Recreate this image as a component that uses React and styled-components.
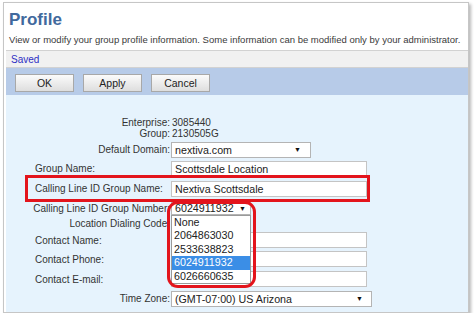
import React from "react";
import styled, { createGlobalStyle } from "styled-components";

const Global = createGlobalStyle`
  html, body { margin: 0; padding: 0; background: #fff; }
  body { font-family: "Liberation Sans", Arial, sans-serif; }
  * { box-sizing: border-box; }
`;

const Card = styled.div`
  margin: 2px 0 0 3px;
  width: 466px;
  height: 311px;
  border: 1px solid #c6c6c6;
  box-shadow: 2px 2px 3px rgba(0, 0, 0, 0.28);
  background: #fff;
  display: flex;
  flex-direction: column;
`;

const Header = styled.div`
  padding: 7px 0 0 5px;
`;

const Title = styled.h1`
  margin: 0;
  font-size: 17px;
  line-height: 20px;
  font-weight: bold;
  color: #41699d;
`;

const Desc = styled.p`
  margin: 4px 0 0;
  font-size: 9.5px;
  line-height: 12px;
  color: #3a3a3a;
  white-space: nowrap;
`;

const SavedBar = styled.div`
  margin: 4px 0 0 2px;
  height: 18px;
  background: #f1f1f1;
  border-top: 1px solid #d2d2d2;
  border-bottom: 1px solid #d2d2d2;
  display: flex;
  align-items: center;
  padding-left: 5px;
  font-size: 10px;
  color: #2f2fc4;
`;

const ButtonBar = styled.div`
  margin-left: 2px;
  height: 27px;
  background: #b7cbe8;
  display: flex;
  align-items: flex-start;
  gap: 9px;
  padding: 6px 0 0 9px;
`;

const Button = styled.button`
  width: 59px;
  height: 18px;
  padding: 0;
  border: 1px solid #a8a8a8;
  background: linear-gradient(#fbfbfb, #dedede);
  font-family: "Liberation Sans", Arial, sans-serif;
  font-size: 10.5px;
  color: #222;
`;

const FormArea = styled.div`
  flex: 1;
  margin-left: 2px;
  background: #e6f3fd;
  padding-top: 21px;
`;

const Row = styled.div`
  display: grid;
  grid-template-columns: 144px 1fr;
  align-items: center;
  height: ${(p) => p.$h}px;
  margin-left: 21px;
  width: 341px;
  ${(p) => (p.$flag ? "outline: 3px solid #e3141c; outline-offset: -1px;" : "")}
`;

const Label = styled.div`
  font-size: 10px;
  color: #333;
  white-space: nowrap;
  text-align: ${(p) => (p.$left ? "left" : "right")};
  padding: ${(p) => (p.$left ? "0 0 0 8px" : "0 1px 0 0")};
`;

const Value = styled.div`
  font-size: 10px;
  color: #333;
  padding-left: 1px;
`;

const TextInput = styled.input`
  display: block;
  width: 196px;
  height: 16px;
  border: 1px solid #c4c4c4;
  background: #fff;
  padding: 0 3px;
  font-family: "Liberation Sans", Arial, sans-serif;
  font-size: 10.7px;
  color: #222;
  outline: none;
`;

const Select = styled.div`
  width: ${(p) => p.$w}px;
  height: ${(p) => p.$hgt || 16}px;
  border: 1px solid #b4b4b4;
  background: #fff;
  display: flex;
  align-items: center;
  justify-content: space-between;
  padding: 0 ${(p) => p.$pr || 7}px 0 3px;
  font-size: 10.7px;
  color: #222;
`;

const Arrow = styled.span`
  font-size: 7px;
  color: #111;
`;

const NumberWrap = styled.div`
  position: relative;
  width: 80px;
`;

const DropList = styled.div`
  position: absolute;
  top: 100%;
  left: 0;
  width: 80px;
  background: #fff;
  border: 1px solid #9a9a9a;
  z-index: 2;
`;

const Option = styled.div`
  height: 13.6px;
  line-height: 13.6px;
  padding-left: 2px;
  font-size: 10.7px;
  color: ${(p) => (p.$sel ? "#fff" : "#222")};
  background: ${(p) => (p.$sel ? "#3b8ee6" : "transparent")};
`;

const RedRing = styled.div`
  position: absolute;
  left: -4px;
  top: -1px;
  width: 89px;
  height: 87px;
  border: 3px solid #e3141c;
  border-radius: 11px;
  z-index: 3;
  pointer-events: none;
`;

const options = ["None", "2064863030", "2533638823", "6024911932", "6026660635"];

export default function App() {
  return (
    <>
      <Global />
      <Card>
        <Header>
          <Title>Profile</Title>
          <Desc>
            View or modify your group profile information. Some information can be modified only by your administrator.
          </Desc>
        </Header>
        <SavedBar>Saved</SavedBar>
        <ButtonBar>
          <Button>OK</Button>
          <Button>Apply</Button>
          <Button>Cancel</Button>
        </ButtonBar>
        <FormArea>
          <Row $h={12}>
            <Label>Enterprise:</Label>
            <Value>3085440</Value>
          </Row>
          <Row $h={11}>
            <Label>Group:</Label>
            <Value>2130505G</Value>
          </Row>
          <Row $h={21}>
            <Label>Default Domain:</Label>
            <Select $w={140} $pr={9}>
              <span>nextiva.com</span>
              <Arrow>▼</Arrow>
            </Select>
          </Row>
          <Row $h={17}>
            <Label $left>Group Name:</Label>
            <TextInput readOnly defaultValue="Scottsdale Location" />
          </Row>
          <Row $h={23} $flag>
            <Label $left>Calling Line ID Group Name:</Label>
            <TextInput readOnly defaultValue="Nextiva Scottsdale" />
          </Row>
          <Row $h={16}>
            <Label>Calling Line ID Group Number:</Label>
            <NumberWrap>
              <Select $w={80} $hgt={13} $pr={4}>
                <span>6024911932</span>
                <Arrow>▼</Arrow>
              </Select>
              <DropList>
                {options.map((o) => (
                  <Option key={o} $sel={o === "6024911932"}>
                    {o}
                  </Option>
                ))}
              </DropList>
              <RedRing />
            </NumberWrap>
          </Row>
          <Row $h={15}>
            <Label>Location Dialing Code:</Label>
            <div />
          </Row>
          <Row $h={18}>
            <Label $left>Contact Name:</Label>
            <TextInput readOnly defaultValue="" />
          </Row>
          <Row $h={20}>
            <Label $left>Contact Phone:</Label>
            <TextInput readOnly defaultValue="" />
          </Row>
          <Row $h={20}>
            <Label $left>Contact E-mail:</Label>
            <TextInput readOnly defaultValue="" />
          </Row>
          <Row $h={19}>
            <Label>Time Zone:</Label>
            <Select $w={201} $pr={8}>
              <span>(GMT-07:00) US Arizona</span>
              <Arrow>▼</Arrow>
            </Select>
          </Row>
        </FormArea>
      </Card>
    </>
  );
}
